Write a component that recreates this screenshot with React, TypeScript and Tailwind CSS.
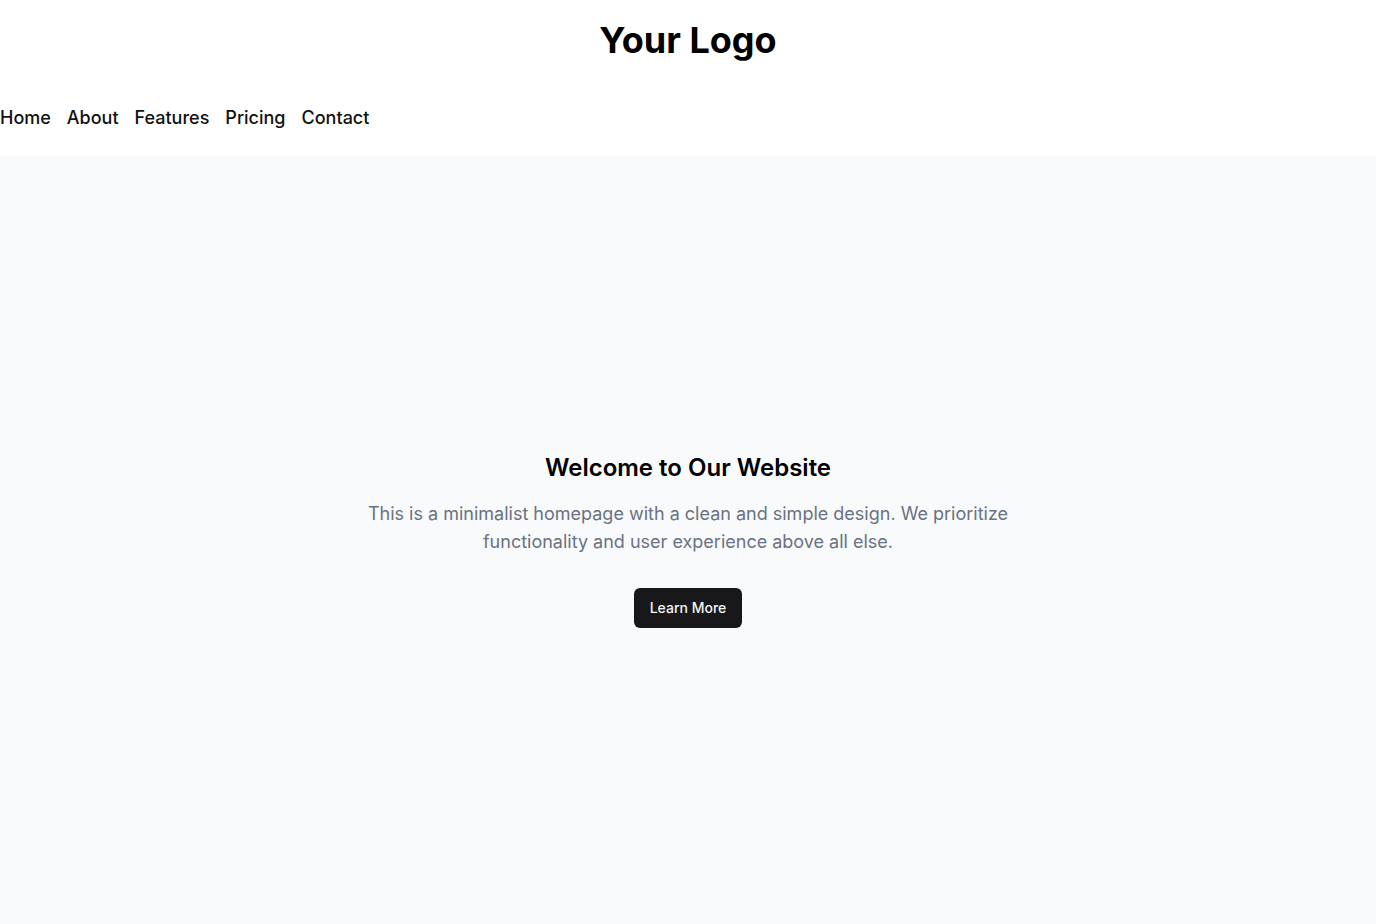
import React from "react";

export default function App() {
  return (
    <div
      className="min-h-screen flex flex-col bg-white text-black"
      style={{ fontFamily: "Inter, 'Noto Sans', sans-serif" }}
    >
      <header className="bg-white">
        <div className="h-[80px] flex items-center justify-center">
          <h1 className="text-4xl font-bold text-black">Your Logo</h1>
        </div>
        <nav className="py-6">
          <ul className="flex gap-4 text-lg font-medium text-[#111111] leading-7">
            <li>Home</li>
            <li>About</li>
            <li>Features</li>
            <li>Pricing</li>
            <li>Contact</li>
          </ul>
        </nav>
      </header>
      <main className="flex-1 bg-gray-50 flex flex-col items-center justify-center text-center">
        <h2 className="text-2xl font-semibold text-black">Welcome to Our Website</h2>
        <p className="mt-4 max-w-2xl text-lg leading-7 text-gray-500">
          This is a minimalist homepage with a clean and simple design. We prioritize functionality and user experience above all else.
        </p>
        <button className="mt-8 h-10 px-4 rounded-md bg-zinc-900 text-[#f4f4f5] text-sm font-medium">
          Learn More
        </button>
      </main>
    </div>
  );
}
